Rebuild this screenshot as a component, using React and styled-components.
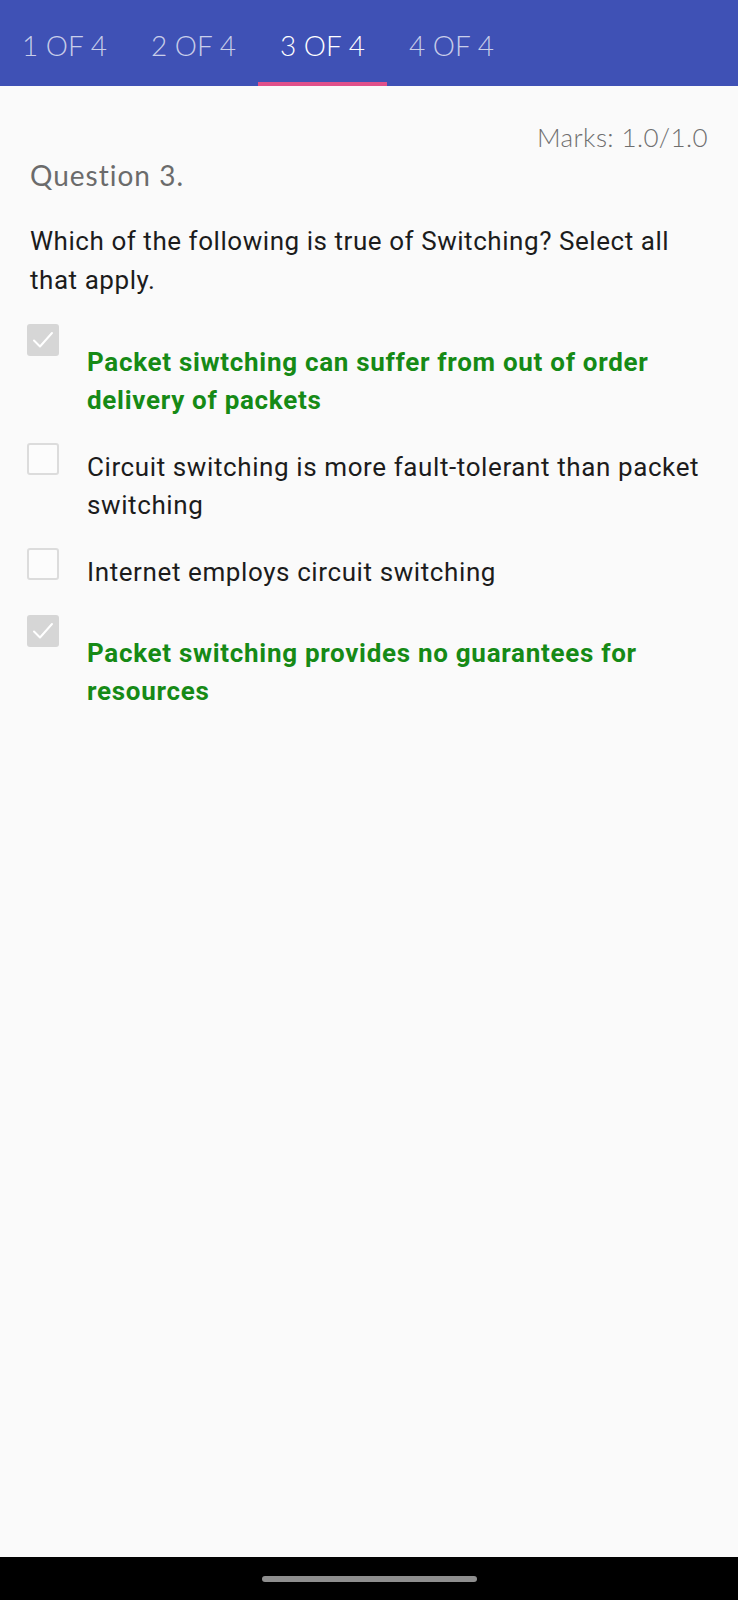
import React from "react";
import styled, { createGlobalStyle } from "styled-components";

const GlobalStyle = createGlobalStyle`
  html, body {
    margin: 0;
    padding: 0;
    background: #fafafa;
  }
  #root {
    min-height: 1600px;
    display: flex;
    flex-direction: column;
  }
`;

const Page = styled.div`
  flex: 1;
  display: flex;
  flex-direction: column;
  background: #fafafa;
`;

const TabBar = styled.div`
  height: 86px;
  background: #3f51b5;
  display: flex;
  flex-shrink: 0;
`;

const Tab = styled.div`
  position: relative;
  width: 129px;
  display: flex;
  align-items: center;
  justify-content: center;
  padding-top: 4px;
  font-family: Lato, "Open Sans", sans-serif;
  font-weight: 300;
  font-size: 28px;
  color: ${(p) => (p.active ? "#ffffff" : "rgba(255, 255, 255, 0.72)")};

  &::after {
    content: "";
    display: ${(p) => (p.active ? "block" : "none")};
    position: absolute;
    left: 0;
    right: 0;
    bottom: 0;
    height: 4px;
    background: #e0508a;
  }
`;

const Content = styled.div`
  flex: 1;
  padding: 0 30px;
  display: flex;
  flex-direction: column;
`;

const Marks = styled.div`
  margin-top: 36px;
  align-self: flex-end;
  font-family: Lato, "Open Sans", sans-serif;
  font-weight: 300;
  font-size: 26px;
  letter-spacing: 0.4px;
  line-height: 30px;
  color: #6f6f6f;
`;

const QuestionNo = styled.div`
  margin-top: 7px;
  font-family: Lato, "Open Sans", sans-serif;
  font-size: 28px;
  letter-spacing: 1px;
  line-height: 32px;
  color: #6b6b6b;
`;

const QuestionText = styled.p`
  margin: 31px 0 24px;
  font-family: Roboto, "Liberation Sans", sans-serif;
  font-size: 26px;
  letter-spacing: 0.55px;
  line-height: 39px;
  color: #1c1c1c;
`;

const Options = styled.div`
  display: flex;
  flex-direction: column;
  gap: 24px;
`;

const Row = styled.div`
  display: flex;
  align-items: flex-start;
  margin-left: -3px;
`;

const Box = styled.div`
  width: 32px;
  height: 32px;
  flex-shrink: 0;
  box-sizing: border-box;
  border-radius: 3px;
  background: ${(p) => (p.checked ? "#d6d6d6" : "#fcfcfc")};
  border: ${(p) => (p.checked ? "none" : "2.5px solid #dcdcdc")};
  display: flex;
  align-items: center;
  justify-content: center;
`;

const Label = styled.div`
  margin-left: 28px;
  padding-top: ${(p) => (p.correct ? "19px" : "5px")};
  font-family: Roboto, "Liberation Sans", sans-serif;
  font-size: 26px;
  letter-spacing: ${(p) => (p.correct ? "0.7px" : "0.6px")};
  line-height: 38px;
  font-weight: ${(p) => (p.correct ? 700 : 400)};
  color: ${(p) => (p.correct ? "#168a16" : "#1c1c1c")};
`;

const NavBar = styled.div`
  height: 43px;
  background: #000;
  display: flex;
  align-items: center;
  justify-content: center;
  flex-shrink: 0;
`;

const Handle = styled.div`
  width: 215px;
  height: 6px;
  border-radius: 3px;
  background: #8e8e8e;
`;

const tabs = ["1 OF 4", "2 OF 4", "3 OF 4", "4 OF 4"];

const options = [
  { text: "Packet siwtching can suffer from out of order delivery of packets", checked: true },
  { text: "Circuit switching is more fault-tolerant than packet switching", checked: false },
  { text: "Internet employs circuit switching", checked: false },
  { text: "Packet switching provides no guarantees for resources", checked: true },
];

const Check = () => (
  <svg width="24" height="24" viewBox="0 0 24 24" fill="none">
    <path d="M3 12.5l6 6L21 5" stroke="#ffffff" strokeWidth="2" strokeLinecap="round" strokeLinejoin="round" />
  </svg>
);

export default function App() {
  return (
    <Page>
      <GlobalStyle />
      <TabBar>
        {tabs.map((t, i) => (
          <Tab key={t} active={i === 2}>
            {t}
          </Tab>
        ))}
      </TabBar>
      <Content>
        <Marks>Marks: 1.0/1.0</Marks>
        <QuestionNo>Question 3.</QuestionNo>
        <QuestionText>Which of the following is true of Switching? Select all that apply.</QuestionText>
        <Options>
          {options.map((o) => (
            <Row key={o.text}>
              <Box checked={o.checked}>{o.checked && <Check />}</Box>
              <Label correct={o.checked}>{o.text}</Label>
            </Row>
          ))}
        </Options>
      </Content>
      <NavBar>
        <Handle />
      </NavBar>
    </Page>
  );
}
